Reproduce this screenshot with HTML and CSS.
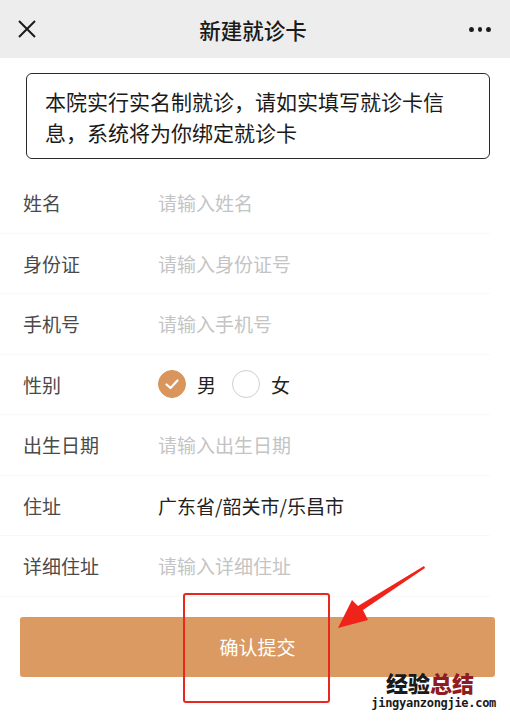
FILE: index.html
```html
<!DOCTYPE html>
<html lang="zh-CN">
<head>
    <meta charset="UTF-8">
    <meta name="viewport" content="width=device-width, initial-scale=1.0">
    <title>新建就诊卡</title>
    <link rel="stylesheet" href="styles.css">
</head>
<body>
    <div class="header">
        <svg class="icon-close" width="20" height="20" viewBox="0 0 20 20">
            <path d="M2 2 L18 18 M18 2 L2 18" stroke="#1a1a1a" stroke-width="2" fill="none"/>
        </svg>
        <h1>新建就诊卡</h1>
        <div class="more"><span></span><span></span><span></span></div>
    </div>

    <div class="notice">本院实行实名制就诊，请如实填写就诊卡信息，系统将为你绑定就诊卡</div>

    <form class="form">
        <div class="row">
            <label>姓名</label>
            <span class="placeholder">请输入姓名</span>
        </div>
        <div class="row">
            <label>身份证</label>
            <span class="placeholder">请输入身份证号</span>
        </div>
        <div class="row">
            <label>手机号</label>
            <span class="placeholder">请输入手机号</span>
        </div>
        <div class="row">
            <label>性别</label>
            <div class="radios">
                <span class="radio checked">
                    <svg width="16" height="16" viewBox="0 0 16 16">
                        <path d="M2.5 8.5 L6.5 12 L13.5 4.5" stroke="#fff" stroke-width="2.2" fill="none" stroke-linecap="round" stroke-linejoin="round"/>
                    </svg>
                </span>
                <span class="radio-text">男</span>
                <span class="radio"></span>
                <span class="radio-text">女</span>
            </div>
        </div>
        <div class="row">
            <label>出生日期</label>
            <span class="placeholder">请输入出生日期</span>
        </div>
        <div class="row">
            <label>住址</label>
            <span class="value">广东省/韶关市/乐昌市</span>
        </div>
        <div class="row">
            <label>详细住址</label>
            <span class="placeholder">请输入详细住址</span>
        </div>

        <button type="button" class="btn-submit">确认提交</button>
    </form>

    <!-- 标注 -->
    <div class="mark-box"></div>
    <svg class="mark-arrow" width="100" height="70" viewBox="0 0 100 70">
        <polygon points="88,0 89,2 27,44 32,54 2,62 16,34 22,40" fill="#f0231a"/>
    </svg>

    <div class="watermark">
        <div class="wm-title">经验<span>总结</span></div>
        <div class="wm-url">jingyanzongjie.com</div>
    </div>
</body>
</html>
```

FILE: styles.css
```css
body {
    margin: 0;
    padding: 0;
    background-color: #fff;
    font-family: "Noto Sans CJK SC", "Noto Sans", sans-serif;
    width: 510px;
    height: 721px;
    position: relative;
    overflow: hidden;
}

.header {
    height: 58px;
    background-color: #ededed;
    display: flex;
    align-items: center;
    justify-content: space-between;
    padding: 0 19px 0 16px;
}

.header h1 {
    margin: 0;
    font-size: 21.5px;
    font-weight: 500;
    color: #1a1a1a;
}

.icon-close {
    display: block;
    margin-left: 1px;
}

.more {
    display: flex;
    gap: 4px;
    width: 22px;
}

.more span {
    width: 5px;
    height: 5px;
    border-radius: 50%;
    background-color: #1a1a1a;
}

.notice {
    margin: 15px 20px 0 26px;
    border: 1.5px solid #2a2a2a;
    border-radius: 6px;
    padding: 12px 36px 10px 18px;
    font-size: 21px;
    line-height: 31px;
    color: #1a1a1a;
    height: 62px;
}

.form {
    margin-top: 14px;
}

.row {
    height: 60.5px;
    display: flex;
    align-items: center;
    padding-left: 23px;
    margin-right: 20px;
    border-bottom: 1px solid #f8f8f8;
    box-sizing: border-box;
    font-size: 19px;
}

.row label {
    width: 135px;
    color: #4a4a4a;
}

.placeholder {
    color: #c4c4c4;
}

.value {
    color: #222;
}

.radios {
    display: flex;
    align-items: center;
}

.radio {
    width: 26px;
    height: 26px;
    border-radius: 50%;
    border: 1px solid #cfcfcf;
    display: flex;
    align-items: center;
    justify-content: center;
}

.radio.checked {
    background-color: #d9955c;
    border-color: #d9955c;
}

.radio-text {
    color: #222;
    margin: 0 16px 0 11px;
}

.btn-submit {
    display: block;
    margin: 20px 15px 0 20px;
    width: 475px;
    height: 60px;
    border: none;
    border-radius: 3px;
    background-color: #da9a62;
    color: #fff;
    font-family: inherit;
    font-size: 19px;
    padding: 0;
}

.mark-box {
    position: absolute;
    left: 183px;
    top: 593px;
    width: 143px;
    height: 106px;
    border: 2.5px solid #e8281e;
    border-radius: 3px;
}

.mark-arrow {
    position: absolute;
    left: 336px;
    top: 566px;
}

.watermark {
    position: absolute;
    left: 360px;
    top: 669px;
    text-align: right;
    width: 136px;
}

.wm-title {
    font-family: "Noto Sans CJK SC", sans-serif;
    font-weight: 900;
    font-size: 22px;
    line-height: 26px;
    color: #1a1a1a;
    padding-right: 22px;
}

.wm-title span {
    color: #8e1c22;
}

.wm-url {
    font-family: "DejaVu Sans Mono", monospace;
    font-size: 12px;
    font-weight: bold;
    color: #1a1a1a;
    line-height: 16px;
    letter-spacing: -0.3px;
}
```
